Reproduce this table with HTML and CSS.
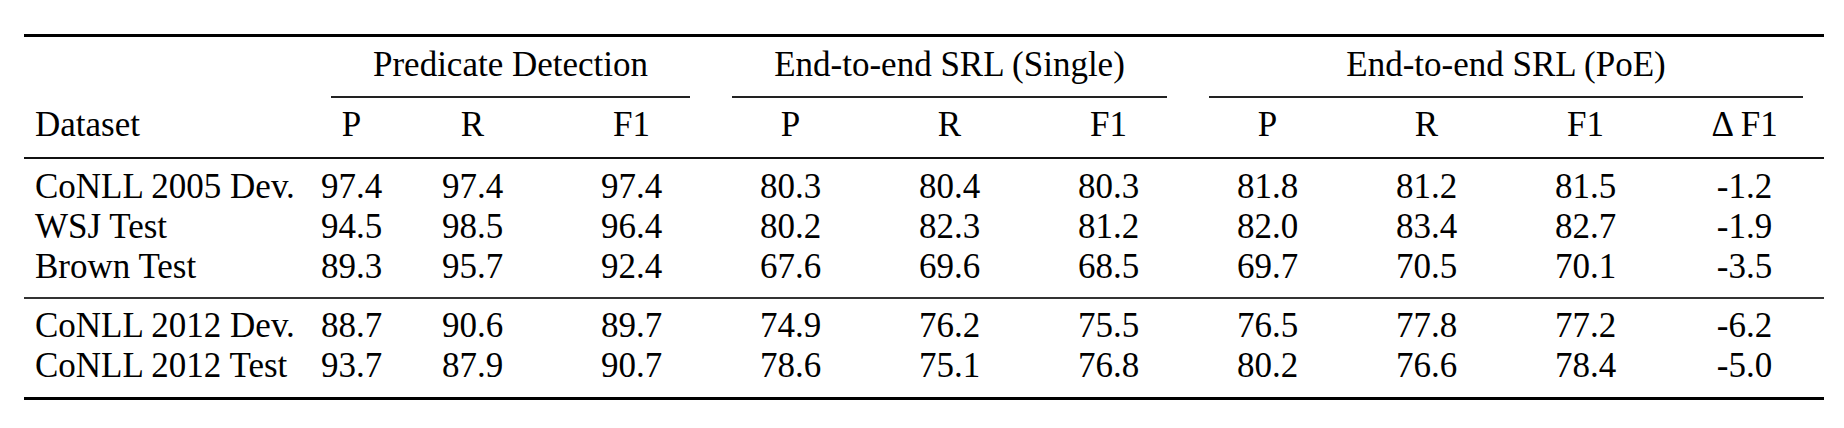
FILE: index.html
```html
<!DOCTYPE html>
<html lang="en">
<head>
    <meta charset="UTF-8">
    <meta name="viewport" content="width=device-width, initial-scale=1.0">
    <title>SRL results table</title>
    <link rel="stylesheet" href="styles.css">
</head>
<body>

<table class="results">
    <colgroup>
        <col class="col-name">
        <col class="col-first">
        <col class="col-num">
        <col class="col-num">
        <col class="col-num">
        <col class="col-num">
        <col class="col-num">
        <col class="col-num">
        <col class="col-num">
        <col class="col-num">
        <col class="col-num">
    </colgroup>
    <thead>
        <tr class="head-top">
            <th></th>
            <th colspan="3"><div class="group">Predicate Detection</div></th>
            <th colspan="3"><div class="group">End-to-end SRL (Single)</div></th>
            <th colspan="4"><div class="group">End-to-end SRL (PoE)</div></th>
        </tr>
        <tr class="head-cols">
            <th class="name">Dataset</th>
            <th>P</th>
            <th>R</th>
            <th>F1</th>
            <th>P</th>
            <th>R</th>
            <th>F1</th>
            <th>P</th>
            <th>R</th>
            <th>F1</th>
            <th>&Delta; F1</th>
        </tr>
    </thead>
    <tbody class="block">
        <tr>
            <td class="name">CoNLL 2005 Dev.</td>
            <td>97.4</td><td>97.4</td><td>97.4</td>
            <td>80.3</td><td>80.4</td><td>80.3</td>
            <td>81.8</td><td>81.2</td><td>81.5</td><td>-1.2</td>
        </tr>
        <tr>
            <td class="name">WSJ Test</td>
            <td>94.5</td><td>98.5</td><td>96.4</td>
            <td>80.2</td><td>82.3</td><td>81.2</td>
            <td>82.0</td><td>83.4</td><td>82.7</td><td>-1.9</td>
        </tr>
        <tr>
            <td class="name">Brown Test</td>
            <td>89.3</td><td>95.7</td><td>92.4</td>
            <td>67.6</td><td>69.6</td><td>68.5</td>
            <td>69.7</td><td>70.5</td><td>70.1</td><td>-3.5</td>
        </tr>
    </tbody>
    <tbody class="block last">
        <tr>
            <td class="name">CoNLL 2012 Dev.</td>
            <td>88.7</td><td>90.6</td><td>89.7</td>
            <td>74.9</td><td>76.2</td><td>75.5</td>
            <td>76.5</td><td>77.8</td><td>77.2</td><td>-6.2</td>
        </tr>
        <tr>
            <td class="name">CoNLL 2012 Test</td>
            <td>93.7</td><td>87.9</td><td>90.7</td>
            <td>78.6</td><td>75.1</td><td>76.8</td>
            <td>80.2</td><td>76.6</td><td>78.4</td><td>-5.0</td>
        </tr>
    </tbody>
</table>

</body>
</html>
```

FILE: styles.css
```css
body {
    margin: 0;
    background-color: #ffffff;
    color: #000000;
    font-family: "Liberation Serif", "Times New Roman", serif;
}

.results {
    margin: 34px 0 0 24px;
    width: 1800px;
    table-layout: fixed;
    border-collapse: separate;
    border-spacing: 0;
    font-size: 35px;
    line-height: 40px;
}

.col-name {
    width: 286px;
}

.col-first {
    width: 83px;
}

.col-num {
    width: 159px;
}

th, td {
    padding: 0;
    font-weight: normal;
    text-align: center;
    white-space: nowrap;
}

.name {
    text-align: left;
    padding-left: 11px;
}

.head-top th {
    border-top: 3px solid #000;
    padding-top: 8px;
}

.group {
    margin: 0 21px;
    padding-bottom: 11px;
    border-bottom: 2px solid #222;
}

.head-cols th {
    padding-top: 7px;
    padding-bottom: 12px;
    border-bottom: 2px solid #111;
}

.block tr:first-child td {
    padding-top: 8px;
}

.block tr:last-child td {
    padding-bottom: 10px;
    border-bottom: 2px solid #333;
}

.block.last tr:first-child td {
    padding-top: 7px;
}

.block.last tr:last-child td {
    padding-bottom: 11px;
    border-bottom: 3px solid #000;
}
```
